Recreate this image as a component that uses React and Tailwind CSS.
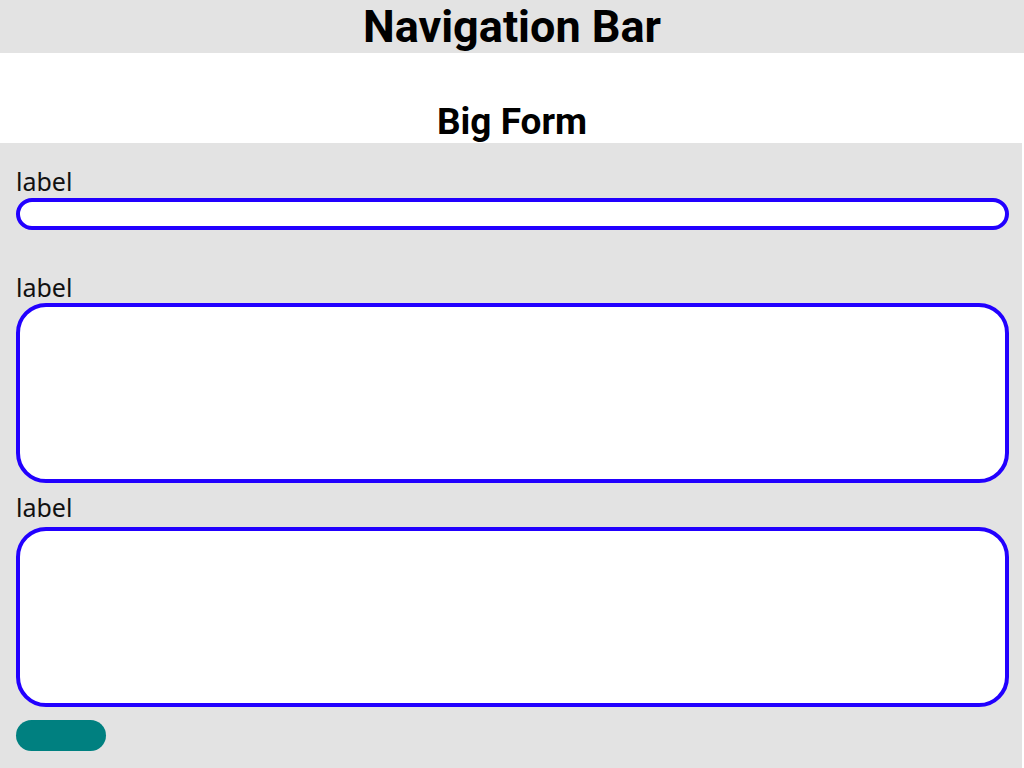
export default function App() {
  return (
    <div className="w-[1024px] h-[768px] bg-white flex flex-col overflow-hidden" style={{ fontFamily: '"Noto Sans", sans-serif' }}>
      <div className="h-[53px] bg-[#e3e3e3] flex items-center justify-center shrink-0">
        <h1 className="text-[45px] font-bold leading-[53px] text-black" style={{ fontFamily: 'Roboto, sans-serif' }}>Navigation Bar</h1>
      </div>
      <div className="h-[90px] flex items-end justify-center shrink-0">
        <h2 className="text-[37px] font-bold leading-[42px] text-black" style={{ fontFamily: 'Roboto, sans-serif' }}>Big Form</h2>
      </div>
      <div className="w-[1022px] flex-1 bg-[#e3e3e3] pl-[16px] pr-[13px] pt-[23px]">
        <label className="block text-[25px] leading-[30px] text-[#111] font-normal">label</label>
        <div className="mt-[2px] h-[32px] rounded-full border-4 border-[#2200ff] bg-white"></div>
        <label className="block mt-[42px] text-[25px] leading-[30px] text-[#111] font-normal">label</label>
        <div className="mt-[1px] h-[180px] rounded-[30px] border-4 border-[#2200ff] bg-white"></div>
        <label className="block mt-[9px] text-[25px] leading-[30px] text-[#111] font-normal">label</label>
        <div className="mt-[5px] h-[180px] rounded-[30px] border-4 border-[#2200ff] bg-white"></div>
        <button className="block mt-[13px] w-[90px] h-[31px] rounded-full bg-[#008080]"></button>
      </div>
    </div>
  );
}
